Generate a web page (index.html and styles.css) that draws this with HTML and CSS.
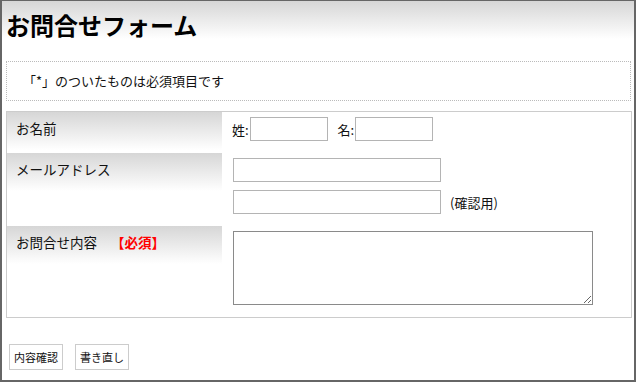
FILE: index.html
```html
<!DOCTYPE html>
<html lang="ja">
<head>
    <meta charset="UTF-8">
    <title>お問合せフォーム</title>
    <link rel="stylesheet" href="styles.css">
</head>
<body>
    <div class="page">
        <h1 class="page-title">お問合せフォーム</h1>
        <div class="content">
            <p class="notice">「*」のついたものは必須項目です</p>

            <table class="form-table">
                <tr class="row-name">
                    <th>お名前</th>
                    <td>
                        <label>姓:<input type="text" class="input-name"></label>
                        <label class="second">名:<input type="text" class="input-name"></label>
                    </td>
                </tr>
                <tr class="row-mail">
                    <th>メールアドレス</th>
                    <td>
                        <div class="field-line"><input type="text" class="input-mail"></div>
                        <div class="field-line"><input type="text" class="input-mail"><span class="hint">(確認用)</span></div>
                    </td>
                </tr>
                <tr class="row-body">
                    <th>お問合せ内容<span class="required">【必須】</span></th>
                    <td><textarea class="input-body"></textarea></td>
                </tr>
            </table>

            <div class="buttons">
                <button type="button">内容確認</button>
                <button type="reset">書き直し</button>
            </div>
        </div>
    </div>
</body>
</html>
```

FILE: styles.css
```css
body {
    margin: 0;
    font-family: "Noto Sans CJK JP", "Noto Sans", sans-serif;
    color: #111;
    background: #fff;
}
.page {
    box-sizing: border-box;
    width: 636px;
    min-height: 382px;
    border: 2px solid #666;
    border-top-width: 1px;
}
.page-title {
    margin: 0;
    padding: 9px 4px 11px;
    font-size: 24px;
    line-height: 29px;
    font-weight: bold;
    color: #000;
    background: linear-gradient(to bottom, #d6d6d6 0, #fff 38px);
}
.content {
    padding: 11px 2px 0 4px;
}
.notice {
    margin: 0 1px 10px 0;
    padding: 9px 16px;
    font-size: 13px;
    line-height: 20px;
    border: 1px dotted #bbb;
}
.form-table {
    width: 100%;
    border-collapse: collapse;
    border: 1px solid #ccc;
}
.form-table th {
    width: 197px;
    padding: 6px 9px;
    text-align: left;
    vertical-align: top;
    font-weight: normal;
    font-size: 13.5px;
    line-height: 20px;
    background: linear-gradient(to bottom, #d6d6d6 0, #fff 38px);
    background-repeat: no-repeat;
}
.form-table td {
    padding: 5px 10px 12px;
    vertical-align: top;
    font-size: 13px;
}
.form-table input,
.form-table textarea {
    box-sizing: border-box;
    margin: 0 0 0 1px;
    height: 24px;
    border: 1px solid #b4b4b4;
    font: inherit;
    vertical-align: middle;
}
.form-table label {
    display: inline-flex;
    align-items: center;
}
.form-table label.second {
    margin-left: 7px;
}
.input-name {
    width: 78px;
}
.field-line {
    display: flex;
    align-items: center;
}
.field-line + .field-line {
    margin-top: 8px;
}
.input-mail {
    width: 208px;
}
.hint {
    margin-left: 9px;
}
.form-table textarea.input-body {
    display: block;
    width: 360px;
    height: 74px;
    border-color: #8a8a8a;
}
.required {
    margin-left: 14px;
    color: #f00;
    font-weight: bold;
}
.buttons {
    display: flex;
    gap: 12px;
    padding: 26px 0 9px 3px;
}
.buttons button {
    height: 26px;
    padding: 0 4px;
    font-family: inherit;
    font-size: 11px;
    color: #111;
    background: #fff;
    border: 1px solid #ccc;
    border-radius: 0;
}
```
